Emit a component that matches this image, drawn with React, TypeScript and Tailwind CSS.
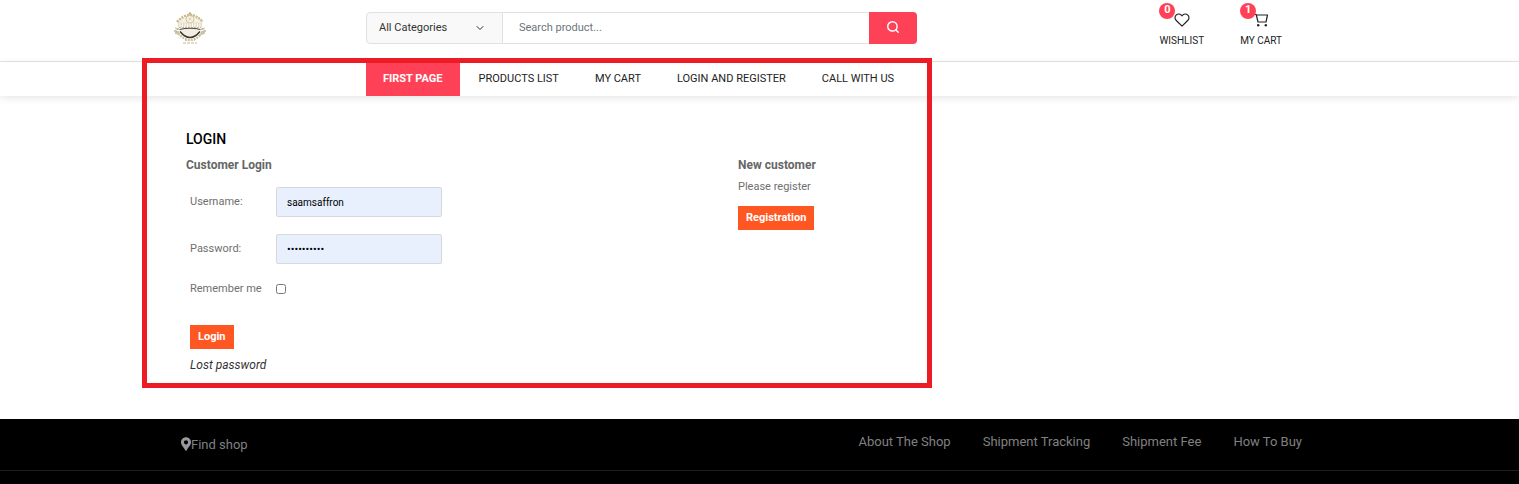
import { ChevronDown, Search } from "lucide-react";
import { FaMapMarkerAlt } from "react-icons/fa";
import { FiHeart } from "react-icons/fi";

const navItems = ["PRODUCTS LIST", "MY CART", "LOGIN AND REGISTER", "CALL WITH US"];
const footerLinks = ["About The Shop", "Shipment Tracking", "Shipment Fee", "How To Buy"];

function Logo() {
  return (
    <svg viewBox="0 0 32 32" className="h-8 w-8" fill="none" aria-label="Shop logo">
      {/* Crest */}
      <path d="M3 9q13-11 26 0l-2 3H5z" fill="#f6f1e4" />
      <circle cx="16" cy="7" r="4" stroke="#d2c49f" strokeWidth="1" />
      <path d="M14.5 5.5l3 3M17.5 5.5l-3 3" stroke="#ded3b5" strokeWidth="1" />
      <path d="M3 10q13-14 26 0" stroke="#c9b98c" strokeWidth="2.5" strokeDasharray="2 1" />
      <circle cx="16" cy="1.5" r="1.2" fill="#bfae82" />
      {/* Lettering band */}
      <path d="M4 13h24" stroke="#e3dac4" strokeWidth="5" strokeDasharray="1.5 1" />
      <path d="M5 15.5h22" stroke="#c9bb94" strokeWidth="1" strokeDasharray="2 1" />
      {/* Wings */}
      <path d="M1 16l4 1-5 2 5 1-4 1 5 2M31 16l-4 1 5 2-5 1 4 1-5 2" stroke="#c4b898" strokeWidth="1" />
      {/* Bowl */}
      <path d="M5 18q11-3 22 0q-3 8-11 8T5 18z" fill="#f3eee1" />
      <path d="M5.5 17.5q10.5-2.5 21 0" stroke="#4b483f" strokeWidth="1.2" />
      <path d="M6 19.5q10 12 20 0" stroke="#35352f" strokeWidth="1.5" />
      <path d="M4 21q12 14 24 0" stroke="#cdbf9b" strokeWidth="2.5" strokeDasharray="2 1" />
      <path d="M11 28.5h10" stroke="#d3c7a8" strokeWidth="1" strokeDasharray="2 1" />
      <path d="M9 31h14" stroke="#d9cfba" strokeWidth="1.5" strokeDasharray="3 1" />
    </svg>
  );
}

function CartIcon() {
  return (
    <svg viewBox="0 0 16 16" className="h-4 w-4" fill="none" stroke="#222">
      <path d="M1 2.5h2.2l1.8 7.5h8l1.5-7H3.5" strokeWidth="1.2" strokeLinejoin="round" />
      <circle cx="5.2" cy="13.2" r="1.2" fill="#222" stroke="none" />
      <circle cx="12.8" cy="13.2" r="1.2" fill="#222" stroke="none" />
    </svg>
  );
}

function Badge({ count }: { count: number }) {
  return (
    <span className="absolute left-0 top-0 flex h-4 w-4 items-start justify-center rounded-full bg-[#ff4157] pt-px text-[11px] font-bold leading-3 text-white">
      {count}
    </span>
  );
}

export default function App() {
  return (
    <div className="bg-white font-[Roboto,sans-serif] text-[11px] leading-4 text-[#6f6f6f]">
      <header className="border-b border-[#e5e5e5]">
        <div className="mx-auto flex h-[61px] max-w-[1171px] items-start">
          <a href="#" className="mt-3 w-48 shrink-0">
            <Logo />
          </a>

          <form className="mt-3 flex h-8 w-[551px] shrink-0">
            <div className="relative w-[137px] shrink-0">
              <select
                aria-label="Category"
                className="h-full w-full appearance-none rounded-l-sm border border-[#e1e1e1] bg-[#f9f9f9] px-3 text-[11px] text-[#333]"
              >
                <option>All Categories</option>
              </select>
              <ChevronDown className="pointer-events-none absolute right-[17px] top-2.5 h-3 w-3 text-[#333]" />
            </div>
            <input
              type="text"
              aria-label="Search product"
              placeholder="Search product..."
              className="min-w-0 flex-1 border-y border-[#e1e1e1] px-4 text-[11px] placeholder:text-[#6c757d]"
            />
            <button
              type="submit"
              aria-label="Search"
              className="flex w-12 items-center justify-center rounded-r-sm bg-[#ff4157] pb-0.5 text-white"
            >
              <Search className="h-3.5 w-3.5" strokeWidth={2.5} />
            </button>
          </form>

          <div className="ml-auto mr-[63px] flex gap-9 pt-[3px] text-[10px] text-[#222]">
            <a href="#" className="relative flex flex-col items-center">
              <FiHeart className="mb-[5px] mt-[9px] h-4 w-4" strokeWidth={1.75} />
              <Badge count={0} />
              <span className="leading-4">WISHLIST</span>
            </a>
            <a href="#" className="relative flex flex-col items-center">
              <span className="mb-[5px] mt-[9px]">
                <CartIcon />
              </span>
              <Badge count={1} />
              <span className="leading-4">MY CART</span>
            </a>
          </div>
        </div>
      </header>

      <div className="relative">
        <nav className="shadow-[0_2px_8px_rgba(0,0,0,0.1)]">
          <div className="mx-auto flex h-[34px] max-w-[1171px] items-stretch gap-0.5 pl-48 text-[#222]">
            <a href="#" className="flex items-center bg-[#ff4157] px-[17px] font-bold text-white">
              FIRST PAGE
            </a>
            {navItems.map((item) => (
              <a key={item} href="#" className="flex items-center px-[17px]">
                {item}
              </a>
            ))}
          </div>
        </nav>

        <main className="mx-auto grid max-w-[1171px] grid-cols-2 pb-[46px] pl-3 pr-[55px] pt-[33px]">
          <h1 className="col-span-2 mb-2 text-[14px] font-medium leading-5 text-black">LOGIN</h1>

          <section>
            <h2 className="text-[12px] font-bold leading-4 text-[#666]">Customer Login</h2>
            <form className="pl-1 pt-[14px]">
              <div className="flex h-[30px] items-center">
                <label htmlFor="username" className="w-[86px]">
                  Username:
                </label>
                <input
                  id="username"
                  type="text"
                  defaultValue="saamsaffron"
                  className="h-full w-[166px] rounded-xs border border-[#d6d8dc] bg-[#e8f0fe] px-2.5 text-[10px] text-black"
                />
              </div>
              <div className="mt-[17px] flex h-[30px] items-center">
                <label htmlFor="password" className="w-[86px]">
                  Password:
                </label>
                <input
                  id="password"
                  type="password"
                  defaultValue="saffron123"
                  className="h-full w-[166px] rounded-xs border border-[#d6d8dc] bg-[#e8f0fe] px-2.5 text-[11px] text-black"
                />
              </div>
              <div className="mt-[17px] flex items-center">
                <label htmlFor="remember" className="w-[86px]">
                  Remember me
                </label>
                <input id="remember" type="checkbox" className="h-2.5 w-2.5" />
              </div>
              <button type="submit" className="mt-7 block bg-[#ff5722] px-2 py-1 font-bold text-white">
                Login
              </button>
              <a href="#" className="mt-2 block text-[12px] italic leading-4 text-[#333]">
                Lost password
              </a>
            </form>
          </section>

          <section>
            <h2 className="text-[12px] font-bold leading-4 text-[#666]">New customer</h2>
            <p className="mt-1.5">Please register</p>
            <button type="button" className="mt-[11px] bg-[#ff5722] px-2 py-1 font-bold text-white">
              Registration
            </button>
          </section>
        </main>

        {/* Highlight frame around the menu and login form */}
        <div className="pointer-events-none absolute inset-x-0 -top-1 bottom-[31px]">
          <div className="mx-auto h-full max-w-[1171px]">
            <div className="-ml-8 h-full w-[790px] border-5 border-[#ed1c24]" />
          </div>
        </div>
      </div>

      <footer className="bg-black text-[13px] text-[#808080]">
        <div className="border-b border-[#1f1f1f]">
          <div className="mx-auto flex h-[51px] max-w-[1171px] items-start justify-between pl-[7px] pr-[43px] pt-[15px]">
            <a href="#" className="flex items-center pt-[3px]">
              <FaMapMarkerAlt className="mb-0.5 h-3.5 w-2.5 text-[#999]" />
              Find shop
            </a>
            <div className="flex gap-8">
              {footerLinks.map((link) => (
                <a key={link} href="#">
                  {link}
                </a>
              ))}
            </div>
          </div>
        </div>
        <div className="h-[13px]" />
      </footer>
    </div>
  );
}
